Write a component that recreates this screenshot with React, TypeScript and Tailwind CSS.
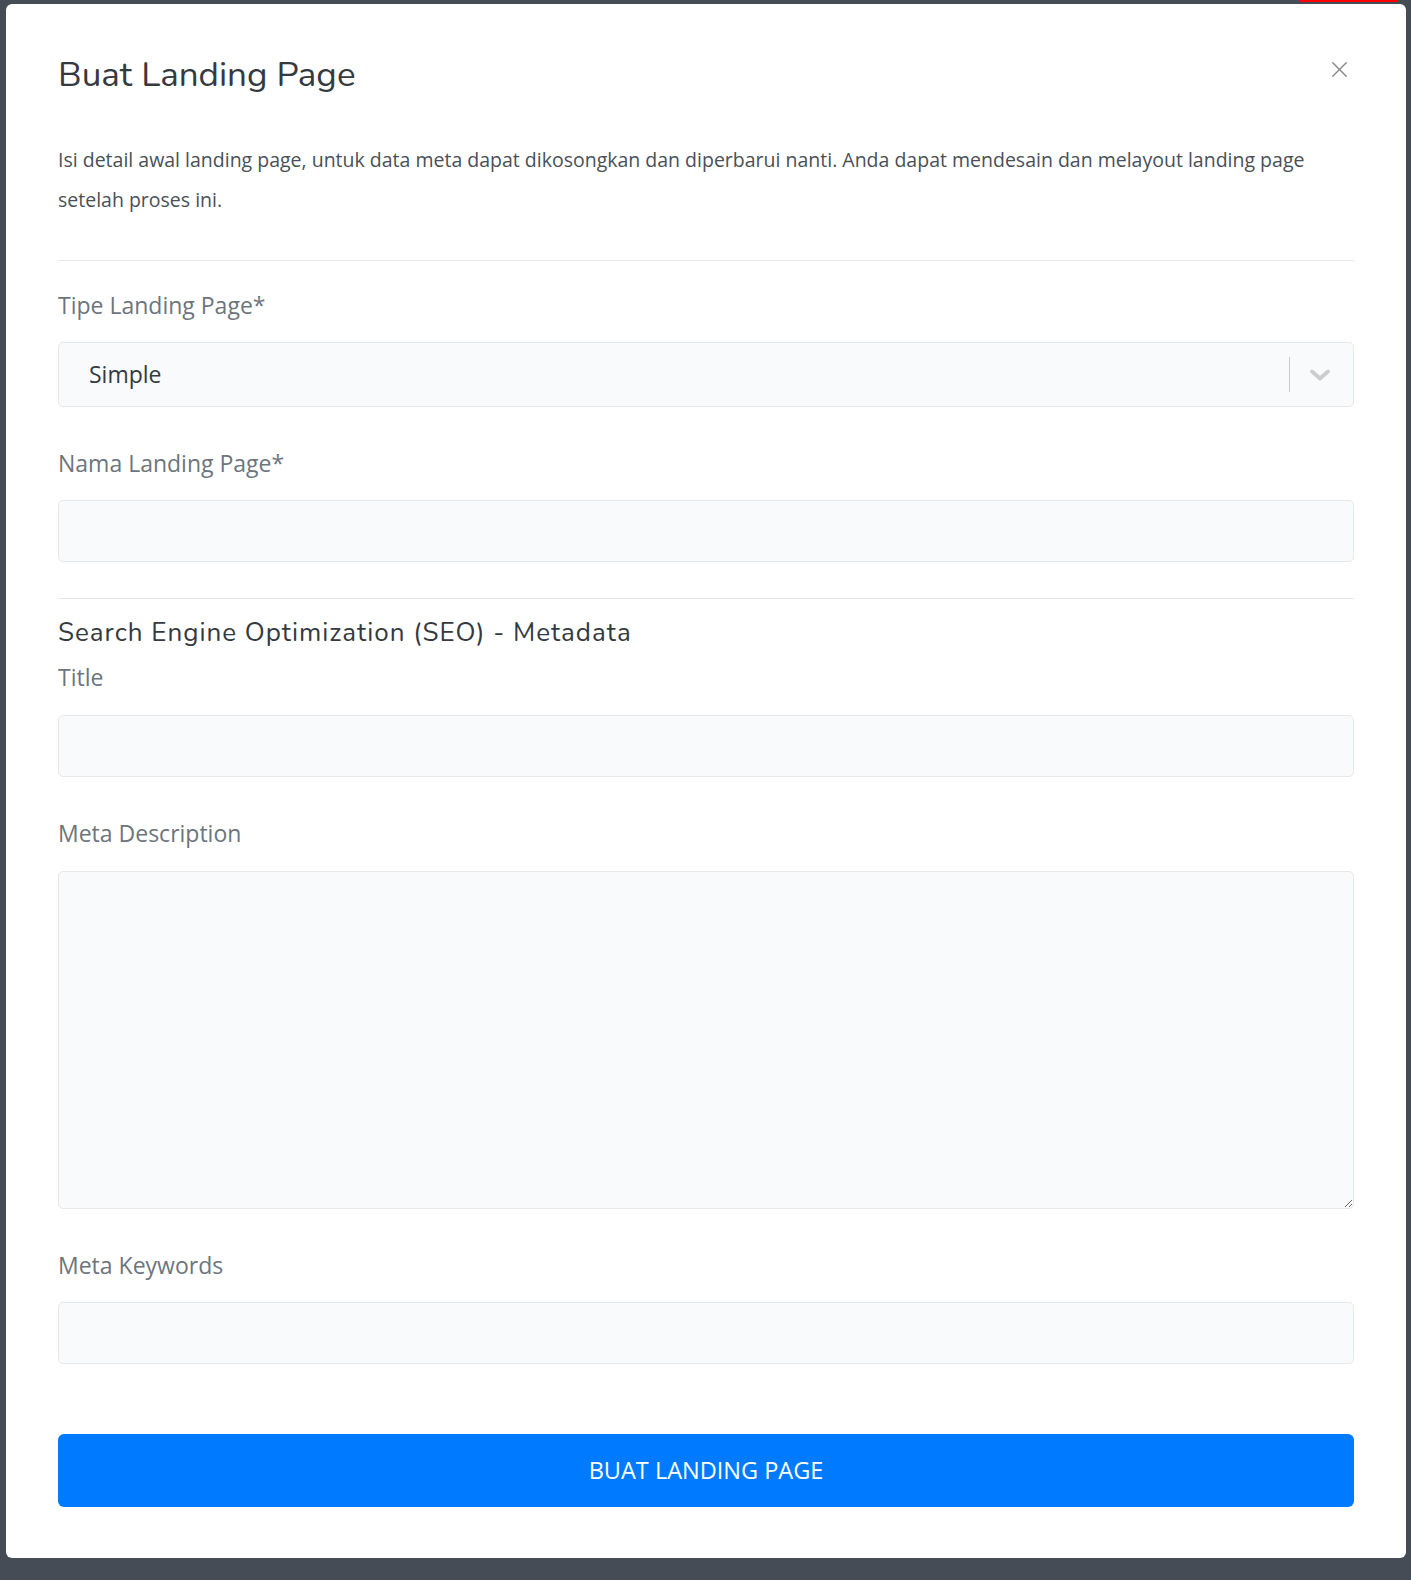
import { X } from 'lucide-react'

const heading = { fontFamily: '"Nunito", Lato, sans-serif' }
const body = { fontFamily: '"Open Sans", "Noto Sans", sans-serif' }

function Label({ children }: { children: React.ReactNode }) {
  return <label className="block text-[23px] leading-[30px] text-[#6c757d]">{children}</label>
}

function TextInput() {
  return (
    <input
      type="text"
      className="block w-full h-[62px] rounded-[5px] border border-[#e5e8eb] bg-[#f9fafb] px-[30px] text-[22px] text-[#343a40] outline-none"
    />
  )
}

export default function App() {
  return (
    <div className="relative min-h-[1580px] bg-[#464c56] pt-[4px] pl-[6px]" style={body}>
      <div className="absolute top-0 right-[13px] h-[2px] w-[98px] bg-[#ff0000]" />
      <div className="w-[1400px] rounded-[6px] bg-white px-[52px] pt-[50px] pb-[51px]">
        <div className="flex items-start justify-between">
          <h1 className="text-[35px] leading-[42px] text-[#343a40]" style={heading}>
            Buat Landing Page
          </h1>
          <button className="mt-[2px] mr-[1px] text-[#8a8a8a]">
            <X size={27} strokeWidth={1.3} />
          </button>
        </div>
        <p className="mt-[44px] text-[19.5px] leading-[40px] text-[#495057]">
          Isi detail awal landing page, untuk data meta dapat dikosongkan dan diperbarui nanti. Anda dapat mendesain dan melayout landing page setelah proses ini.
        </p>
        <div className="mt-[40px] h-px bg-[#e5e7ea]" />

        <div className="mt-[29px]">
          <Label>Tipe Landing Page*</Label>
          <div className="mt-[22px] flex h-[65px] items-center rounded-[5px] border border-[#e5e8eb] bg-[#f9fafb]">
            <span className="flex-1 pl-[30px] text-[23px] text-[#343a40]">Simple</span>
            <div className="h-[35px] w-px bg-[#cccccc]" />
            <div className="flex w-[63px] items-center justify-center pr-[3px] text-[#cccccc]">
              <svg width="22" height="14" viewBox="0 0 22 14" fill="none" stroke="currentColor" strokeWidth="3.8" strokeLinecap="round" strokeLinejoin="round">
                <path d="M3 3.5l8 7 8-7" />
              </svg>
            </div>
          </div>
        </div>

        <div className="mt-[41px]">
          <Label>Nama Landing Page*</Label>
          <div className="mt-[22px]">
            <TextInput />
          </div>
        </div>

        <div className="mt-[36px] h-px bg-[#e5e7ea]" />

        <h2 className="mt-[19px] text-[26px] leading-[30px] tracking-[1px] text-[#343a40]" style={heading}>
          Search Engine Optimization (SEO) - Metadata
        </h2>

        <div className="mt-[14px]">
          <Label>Title</Label>
          <div className="mt-[23px]">
            <TextInput />
          </div>
        </div>

        <div className="mt-[41px]">
          <Label>Meta Description</Label>
          <textarea className="mt-[23px] block h-[338px] w-full rounded-[5px] border border-[#e5e8eb] bg-[#f9fafb] px-[30px] py-[16px] text-[22px] text-[#343a40] outline-none" />
        </div>

        <div className="mt-[41px]">
          <Label>Meta Keywords</Label>
          <div className="mt-[22px]">
            <TextInput />
          </div>
        </div>

        <button className="mt-[70px] flex h-[73px] w-full items-center justify-center rounded-[6px] bg-[#007bff] text-[23.5px] text-white">
          BUAT LANDING PAGE
        </button>
      </div>
    </div>
  )
}
